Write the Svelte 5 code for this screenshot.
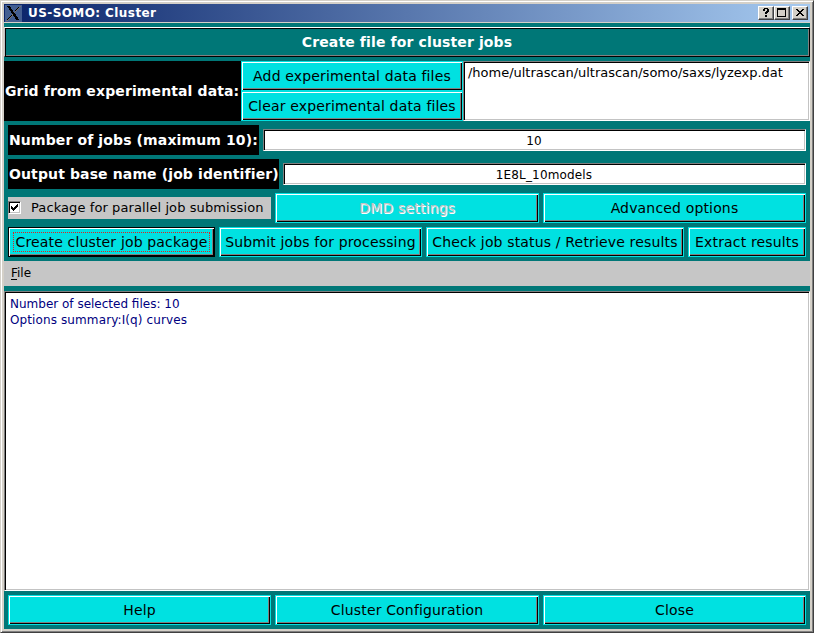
<script>
  let files = ['/home/ultrascan/ultrascan/somo/saxs/lyzexp.dat'];
  let jobs = '10';
  let baseName = '1E8L_10models';
  let parallel = true;
</script>

<div class="window">
  <div class="titlebar">
    <svg class="logo" width="17" height="17" viewBox="0 0 17 17" shape-rendering="crispEdges">
      <rect width="17" height="17" fill="#435e91" />
      <path d="M14 1h2v1h-1v1h-1v1h-1v1h-1v1h-1v1h-1v2H9v1H8v1H7v1H6v1H5v1H4v1H3v1H1v-1h1v-1h1v-1h1v-1h1v-1h1v-1h1V9h1V8h1V7h1V6h1V5h1V4h1V3h1V2h1z" fill="#77716b" />
      <path d="M2 1h3v1h1v2h1v1h1v2h1v1h1v1h1v2h1v1h1v2h1v1h-3v-1h-1v-2H9v-1H8V9H7V8H6V6H5V5H4V3H3V2H2zM13 2h1v1h-1v1h-1v1h-1v1h-1V5h1V4h1V3h1zM6 10h1v1H6v1H5v1H4v1H3v1H2v-1h1v-1h1v-1h1v-1h1z" fill="#000" />
    </svg>
    <span class="title">US-SOMO: Cluster</span>
    <div class="controls">
      <button aria-label="Help"><svg width="14" height="12" viewBox="0 0 14 12" shape-rendering="crispEdges"><path d="M4 2h1V1h4v1h1v3H9v1H8v1H6V5h1V4h1V2H6v2H4zM6 8h2v2H6z" /></svg></button>
      <button aria-label="Maximize"><svg width="14" height="12" viewBox="0 0 14 12" shape-rendering="crispEdges"><path d="M2 1h9v9H2zM3 3v6h7V3z" fill-rule="evenodd" /></svg></button>
      <button class="x" aria-label="Close window"><svg width="14" height="12" viewBox="0 0 14 12" shape-rendering="crispEdges"><path d="M3 2h2v1h1v1h2V3h1V2h2v1h-1v1H9v1H8v1h1v1h1v1h1v1H9V8H8V7H6v1H5v1H3V8h1V7h1V6h1V5H5V4H4V3H3z" /></svg></button>
    </div>
  </div>

  <div class="client">
    <div class="heading"><span>Create file for cluster jobs</span></div>

    <div class="data-row">
      <div class="label grid-label"><span>Grid from experimental data:</span></div>
      <div class="stack">
        <button class="btn">Add experimental data files</button>
        <button class="btn">Clear experimental data files</button>
      </div>
      <div class="sunken list">{#each files as f}<div>{f}</div>{/each}</div>
    </div>

    <div class="form">
      <div class="row">
        <label class="label jobs" for="jobs"><span>Number of jobs (maximum 10):</span></label>
        <input id="jobs" class="sunken" bind:value={jobs} />
      </div>
      <div class="row">
        <label class="label base" for="base"><span>Output base name (job identifier)</span></label>
        <input id="base" class="sunken" bind:value={baseName} />
      </div>
      <div class="row">
        <label class="check">
          <input type="checkbox" bind:checked={parallel} />
          <span class="box sunken">
            {#if parallel}<svg width="7" height="7" viewBox="0 0 7 7" shape-rendering="crispEdges"><path d="M0 2h1v1h1v1h1V3h1V2h1V1h1V0h1v3H6v1H5v1H4v1H3v1H2V6H1V5H0z" /></svg>{/if}
          </span>
          <span class="check-text">Package for parallel job submission</span>
        </label>
        <button class="btn w264" disabled>DMD settings</button>
        <button class="btn w263">Advanced options</button>
      </div>
      <div class="row">
        <button class="btn default create"><span>Create cluster job package</span></button>
        <button class="btn submit">Submit jobs for processing</button>
        <button class="btn status">Check job status / Retrieve results</button>
        <button class="btn extract">Extract results</button>
      </div>
    </div>

    <div class="menubar"><span><u>F</u>ile</span></div>

    <div class="sunken log">
      <div>Number of selected files: 10</div>
      <div class="summary">Options summary:I(q) curves</div>
    </div>

    <div class="row footer">
      <button class="btn w263">Help</button>
      <button class="btn w264">Cluster Configuration</button>
      <button class="btn w263">Close</button>
    </div>
  </div>
</div>

<style>
  :global(body) { margin: 0; overflow: hidden; }
  .window, .window * { box-sizing: border-box; }
  .window {
    width: 814px; height: 633px; padding: 3px;
    display: flex; flex-direction: column;
    font-family: "DejaVu Sans", sans-serif; font-size: 12px; color: #000;
    background: #d4d0c8;
    border: 1px solid; border-color: #d4d0c8 #404040 #404040 #d4d0c8;
    box-shadow: inset 1px 1px #fff, inset -1px -1px #808080;
  }
  button, input { font-family: inherit; margin: 0; padding: 0; border-radius: 0; outline: none; }
  .titlebar {
    height: 18px; margin-bottom: 1px; flex: none; display: flex; align-items: center;
    background: linear-gradient(90deg, #0a246a, #a6caf0);
  }
  .logo { margin: 1px 0 0 1px; }
  .title { color: #fff; font-weight: bold; font-size: 12px; line-height: 18px; margin-left: 6px; letter-spacing: .42px; white-space: nowrap; }
  .controls { margin-left: auto; display: flex; padding-right: 2px; }
  .controls button {
    width: 16px; height: 14px; border: 1px solid; border-color: #fff #404040 #404040 #fff;
    background: #d4d0c8; box-shadow: inset -1px -1px #808080; display: flex;
  }
  .controls .x { margin-left: 2px; }
  .controls svg { display: block; flex: none; }
  .client { flex: 1; display: flex; flex-direction: column; background: #007777; padding-top: 4px; }
  .heading {
    height: 30px; flex: none; color: #fff; font-weight: bold; font-size: 14px; letter-spacing: .13px;
    border: 1px solid; border-color: #fff #000 #000 #c3c3c3;
    box-shadow: inset 1px 1px #000, inset -1px -1px #808080;
    display: flex; align-items: center; justify-content: center;
  }
  .data-row { display: flex; height: 60px; margin-top: 4px; flex: none; }
  .label {
    background: #000; color: #fff; font-weight: bold; font-size: 14px; height: 30px; letter-spacing: .12px;
    display: flex; align-items: center; padding-left: 1px; flex: none; white-space: nowrap;
  }
  .grid-label { width: 237px; height: 60px; }
  .stack { width: 222px; display: flex; flex-direction: column; }
  .btn {
    height: 30px; flex: none; font-size: 14px; color: #000; background: #00e1e1; white-space: nowrap;
    border: 1px solid #00e1e1; text-align: center; line-height: 28px; letter-spacing: .16px;
    box-shadow: inset 1px 1px #fff, inset -1px -1px #000, inset -2px -2px #808080;
  }
  .btn:disabled { color: #c3c3c3; text-shadow: 1px 1px #fff; }
  .default { border-color: #000; }
  .default span { display: block; margin: 4px; height: 20px; line-height: 18px; border: 1px dotted #e02020; }
  .sunken {
    background: #fff; border: 1px solid; border-color: #808080 #fff #fff #808080;
    box-shadow: inset 1px 1px #000, inset -1px -1px #c3c3c3;
  }
  .list { flex: 1; padding: 3px 4px; line-height: 16px; font-size: 13px; letter-spacing: -.02px; }
  .form { display: flex; flex-direction: column; gap: 4px; padding: 4px; }
  .row { display: flex; align-items: center; gap: 4px; height: 30px; flex: none; }
  .jobs { width: 251px; }
  .base { width: 271px; }
  .row > input { flex: 1; min-width: 0; height: 22px; padding: 2px 1px 0 0; text-align: center; font-size: 12px; letter-spacing: .15px; color: #000; }
  .check { width: 263px; height: 22px; background: #c6c6c6; display: flex; align-items: center; font-size: 13px; letter-spacing: .09px; }
  .check input { display: none; }
  .box { width: 13px; height: 13px; margin-top: -1px; display: flex; align-items: center; justify-content: center; }
  .check-text { margin: -1px 0 0 10px; white-space: nowrap; }
  .w263 { width: 263px; }
  .w264 { width: 264px; }
  .create { width: 207px; }
  .submit { width: 203px; }
  .status { width: 258px; }
  .extract { width: 118px; }
  .menubar { height: 25px; flex: none; background: #c6c6c6; padding-left: 7px; line-height: 24px; }
  u { text-underline-offset: 2px; }
  .log { margin-top: 5px; flex: 1; padding: 4px 5px; color: #000080; line-height: 16px; }
  .summary { letter-spacing: .11px; }
  .footer { height: 38px; padding: 0 4px; }
</style>
